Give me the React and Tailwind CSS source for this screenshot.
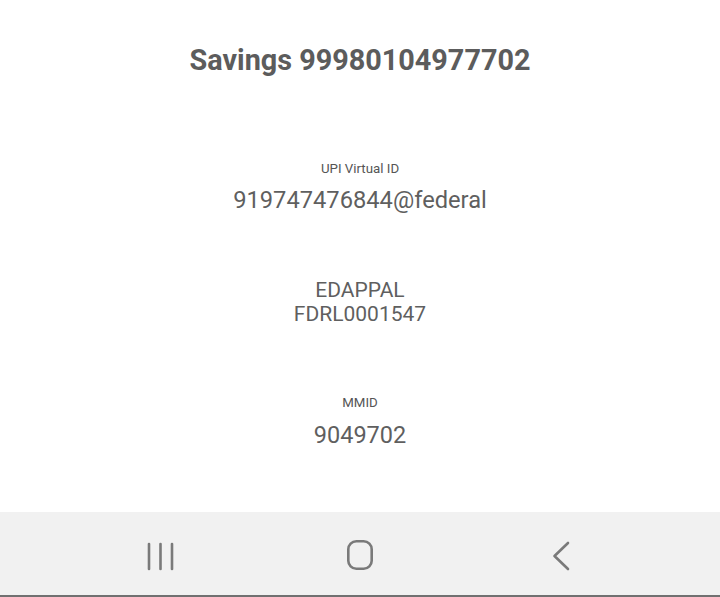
import React from 'react';

// Account details screen with Android-style nav bar
const NavBar = () => (
  <div className="flex h-[85px] items-start justify-center gap-[160px] border-b-2 border-[#707070] bg-[#f1f1f1] pt-[24px]">
    {/* recent apps */}
    <svg width="40" height="40" viewBox="0 0 40 40" fill="none" stroke="#7a7a7a" strokeWidth="2.6" strokeLinecap="round">
      <line x1="9" y1="8" x2="9" y2="33" />
      <line x1="20.5" y1="8" x2="20.5" y2="33" />
      <line x1="32" y1="8" x2="32" y2="33" />
    </svg>
    {/* home */}
    <svg width="40" height="40" viewBox="0 0 40 40" fill="none" stroke="#7a7a7a" strokeWidth="2.6">
      <rect x="8.3" y="5.3" width="23.4" height="27.4" rx="8" />
    </svg>
    {/* back */}
    <svg width="40" height="40" viewBox="0 0 40 40" fill="none" stroke="#7a7a7a" strokeWidth="2.6" strokeLinecap="round" strokeLinejoin="round">
      <polyline points="28,7 14.5,20 28,33" />
    </svg>
  </div>
);

export default function App() {
  return (
    <div className="flex h-[597px] w-[720px] flex-col bg-white font-['Roboto',sans-serif] text-[#5f5f5f]">
      <div className="flex h-[512px] flex-col items-center text-center">
        <h1 className="mt-[43px] text-[28.8px] font-bold leading-[34px] text-[#5c5c5c]">
          Savings 99980104977702
        </h1>

        <p className="mt-[84px] text-[13.3px] leading-[16px] text-[#555]">UPI Virtual ID</p>
        <p className="mt-[9px] text-[23.7px] leading-[28px]">919747476844@federal</p>

        <div className="mt-[64px] text-[21px] leading-[24px]">
          <p>EDAPPAL</p>
          <p>FDRL0001547</p>
        </div>

        <p className="mt-[69px] text-[13.3px] leading-[16px] text-[#555]">MMID</p>
        <p className="mt-[10px] text-[23.5px] leading-[28px]">9049702</p>
      </div>
      <NavBar />
    </div>
  );
}
